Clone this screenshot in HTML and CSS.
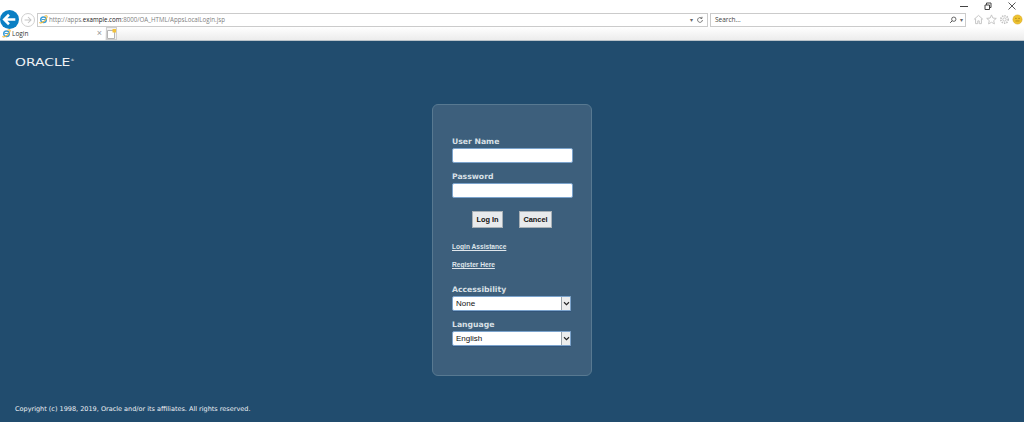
FILE: index.html
```html
<!DOCTYPE html>
<html lang="en">
<head>
<meta charset="utf-8">
<title>Login</title>
<link rel="stylesheet" href="styles.css">
</head>
<body>
<svg class="defs" width="0" height="0" aria-hidden="true">
  <symbol id="ie" viewBox="0 0 16 16">
    <circle cx="8" cy="8.500" r="5" fill="none" stroke="#3f9fd8" stroke-width="2.600"/>
    <path d="M4.500 8h8" stroke="#3f9fd8" stroke-width="1.800"/>
    <path d="M1.500 12.500C1 15 4 14.500 7 12.500 11 10 15 5 14.500 2.500 14 .8 11.500 1.300 9.500 2.500" fill="none" stroke="#f0b93a" stroke-width="1.800"/>
  </symbol>
</svg>
<header class="browser">
  <div class="window-row">
    <svg class="win-icon" viewBox="0 0 8 8"><path d="M0 4.500h8" stroke="#444" stroke-width="1"/></svg>
    <svg class="win-icon" viewBox="0 0 8 8"><path d="M1 3h4.500v4.500H1zM2.500 3V1H7v4.500H5.500" fill="none" stroke="#444" stroke-width="1"/></svg>
    <svg class="win-icon" viewBox="0 0 8 8"><path d="M.5.500l7 7M7.500.500l-7 7" stroke="#444" stroke-width=".9"/></svg>
  </div>
  <div class="nav-row">
    <div class="back">
      <svg viewBox="0 0 18 18"><path d="M14.500 9h-10M8.500 4.500L4 9l4.500 4.500" fill="none" stroke="#fff" stroke-width="2.400"/></svg>
    </div>
    <div class="forward">
      <svg viewBox="0 0 14 14"><path d="M3 7h7M7 3.500L10.500 7 7 10.500" fill="none" stroke="#c4c4c4" stroke-width="1.200"/></svg>
    </div>
    <div class="address">
      <svg class="ie"><use href="#ie"/></svg>
      <span class="url">http://apps.<b>example.com</b>:8000/OA_HTML/AppsLocalLogin.jsp</span>
      <span class="caret">▾</span>
      <svg class="mini" viewBox="0 0 10 10"><path d="M8 5a3 3 0 1 1-1-2.300M7.500 1v2h-2" fill="none" stroke="#555" stroke-width="1"/></svg>
    </div>
    <div class="search">
      <span class="search-text">Search...</span>
      <svg class="mini" viewBox="0 0 10 10"><circle cx="6" cy="4" r="2.700" fill="none" stroke="#444" stroke-width="1"/><path d="M4 6L1.500 8.500" stroke="#444" stroke-width="1.200"/></svg>
      <span class="caret">▾</span>
    </div>
    <div class="tools">
      <svg class="tool" viewBox="0 0 12 12"><path d="M1 6l5-4.500L11 6M2.800 5v5.500h2.400V7.500h1.600v3h2.400V5" fill="none" stroke="#c2c2c2" stroke-width="1"/></svg>
      <svg class="tool" viewBox="0 0 12 12"><path d="M6 1l1.500 3.400 3.700.4-2.800 2.400.8 3.600L6 9l-3.200 1.800.8-3.600L.8 4.800l3.700-.4z" fill="none" stroke="#c2c2c2" stroke-width="1"/></svg>
      <svg class="tool" viewBox="0 0 12 12"><circle cx="6" cy="6" r="1.800" fill="none" stroke="#c2c2c2" stroke-width="1"/><circle cx="6" cy="6" r="4" fill="none" stroke="#c2c2c2" stroke-width="1.800" stroke-dasharray="1.500 1.100"/></svg>
      <svg class="tool" viewBox="0 0 12 12"><circle cx="6" cy="6" r="5" fill="#eec32f" stroke="#d9a520" stroke-width=".6"/><circle cx="4.300" cy="4.800" r=".7" fill="#a8801a"/><circle cx="7.700" cy="4.800" r=".7" fill="#a8801a"/><path d="M3.800 7.600h4.400" stroke="#a8801a" stroke-width=".8"/></svg>
    </div>
  </div>
  <div class="tab-row">
    <div class="tab">
      <svg class="ie"><use href="#ie"/></svg>
      <span class="tab-title">Login</span>
      <span class="tab-close">×</span>
    </div>
    <div class="new-tab">
      <svg class="new-page" viewBox="0 0 9 10"><path d="M.5 1.500h7v8h-7z" fill="#fff" stroke="#b5b5b5"/><rect x="5.500" y="0" width="3.500" height="3.500" fill="#f2c13a"/></svg>
    </div>
  </div>
</header>
<main class="page">
  <div class="logo"><span class="logo-text">ORACLE<sup class="reg">®</sup></span></div>
  <section class="panel">
    <label class="label">User Name</label>
    <input class="field" type="text">
    <label class="label label-next">Password</label>
    <input class="field" type="password">
    <div class="buttons">
      <button class="btn btn-login">Log In</button>
      <button class="btn btn-cancel">Cancel</button>
    </div>
    <a class="link link-first" href="#">Login Assistance</a>
    <a class="link link-second" href="#">Register Here</a>
    <label class="label label-access">Accessibility</label>
    <div class="select"><span class="select-value">None</span><span class="arrow"><svg viewBox="0 0 8 6"><path d="M1 1.500l3 3 3-3" fill="none" stroke="#222" stroke-width="1.300"/></svg></span></div>
    <label class="label label-next">Language</label>
    <div class="select"><span class="select-value">English</span><span class="arrow"><svg viewBox="0 0 8 6"><path d="M1 1.500l3 3 3-3" fill="none" stroke="#222" stroke-width="1.300"/></svg></span></div>
  </section>
  <footer class="copyright">Copyright (c) 1998, 2019, Oracle and/or its affiliates. All rights reserved.</footer>
</main>
</body>
</html>
```
FILE: styles.css
```css
* { box-sizing: border-box; }
html, body { margin: 0; height: 100%; }
body { display: flex; flex-direction: column; height: 422px; overflow: hidden; background: #214c6e; font-family: "Liberation Sans", Arial, sans-serif; }
.defs { position: absolute; }

.browser { height: 41px; flex: none; background: #fff; display: flex; flex-direction: column; }
.window-row { height: 12px; display: flex; justify-content: flex-end; gap: 16px; padding: 2px 8px 0 0; }
.win-icon { width: 8px; height: 8px; }
.nav-row { height: 15px; display: flex; align-items: center; position: relative; }
.back { width: 19px; height: 19px; border-radius: 50%; background: #0a7fc4; flex: none; position: relative; z-index: 1; }
.back svg { display: block; width: 19px; height: 19px; }
.forward { width: 14px; height: 14px; border: 1px solid #cfcfcf; border-radius: 50%; margin-left: 2px; flex: none; display: flex; }
.forward svg { width: 12px; height: 12px; }
.address { margin-left: 2px; width: 671px; height: 14px; border: 1px solid #cbcbcb; display: flex; align-items: center; padding: 0 3px 0 1px; flex: none; }
.ie { width: 9px; height: 9px; flex: none; }
.url { font-family: "Open Sans", sans-serif; font-size: 6.200px; color: #808080; margin-left: 1px; flex: 1; }
.url b { font-weight: 400; color: #222; }
.caret { font-size: 6px; color: #666; margin-right: 3px; }
.mini { width: 8px; height: 8px; flex: none; }
.search { margin-left: 2px; width: 256px; height: 14px; border: 1px solid #cbcbcb; display: flex; align-items: center; padding: 0 1px 0 4px; flex: none; }
.search-text { font-family: "Open Sans", sans-serif; font-size: 6.500px; color: #444; flex: 1; }
.search .mini { margin-right: 3px; }
.search .caret { margin-right: 1px; }
.tools { display: flex; gap: 2px; margin-left: 7px; }
.tool { width: 11px; height: 11px; }

.tab-row { height: 14px; display: flex; background: linear-gradient(#fff, #ececec); border-bottom: 1px solid #b9c2c9; }
.tab { width: 105px; height: 13px; background: #fff; display: flex; align-items: center; padding: 0 2px; }
.tab-title { font-family: "Open Sans", sans-serif; font-size: 6.500px; color: #333; margin-left: 1px; flex: 1; }
.tab-close { font-size: 9px; color: #999; margin-right: 1px; line-height: 1; }
.new-tab { width: 11px; height: 13px; margin-left: 1px; border: 1px solid #cfcfcf; background: #f2f2f2; display: flex; align-items: center; justify-content: center; }
.new-page { width: 9px; height: 10px; }

.page { flex: 1; display: flex; flex-direction: column; align-items: center; }
.logo { align-self: flex-start; margin: 11px 0 0 15px; height: 15px; }
.logo-text { display: inline-block; transform: scaleX(1.32); transform-origin: left center; font-family: "DejaVu Sans", sans-serif; font-size: 10.500px; line-height: 12px; letter-spacing: 0; color: #eef1f4; }
.reg { font-size: 3px; vertical-align: top; line-height: 8px; }

.panel { margin-top: 37px; width: 160px; height: 272px; border: 1px solid #587991; border-radius: 6px; background: #3d5f7c; padding: 30px 19px 0; display: flex; flex-direction: column; align-items: flex-start; }
.label { font-family: "DejaVu Sans", sans-serif; font-weight: 700; font-size: 7.700px; line-height: 14px; color: #d9e0e6; height: 12px; }
.label-next { margin-top: 7px; }
.field { display: block; width: 121px; height: 15px; margin: 1px 0 0; padding: 0; border: 1px solid #7ba3cc; border-radius: 2px; background: #fff; }
.buttons { display: flex; gap: 16px; margin: 13px 0 0 20px; }
.btn { height: 17px; padding: 0; border: 1px solid #a8b0b6; background: #e8eaec; font-family: "Liberation Sans", sans-serif; font-weight: 700; font-size: 7.400px; color: #111; }
.btn-login { width: 31px; }
.btn-cancel { width: 33px; }
.link { font-family: "Liberation Sans", sans-serif; font-size: 6.600px; font-weight: 700; line-height: 10px; color: #dfe5ea; text-decoration: underline; }
.link-first { margin-top: 14px; }
.link-second { margin-top: 8px; }
.label-access { margin-top: 13px; }
.select { width: 119px; height: 15px; margin-top: 1px; background: #fff; border: 1px solid #7ba3cc; border-radius: 2px 0 0 2px; display: flex; align-items: center; box-shadow: 0 1px 0 #33557a; }
.select-value { flex: 1; font-size: 8px; color: #111; padding-left: 3px; }
.arrow { width: 9px; height: 13px; background: #eceded; border-left: 1px solid #9aa3aa; display: flex; align-items: center; justify-content: center; }
.arrow svg { width: 7px; height: 5px; }
.copyright { align-self: flex-start; margin: 28px 0 0 15px; font-family: "DejaVu Sans", sans-serif; font-size: 6.500px; line-height: 10px; color: #eef1f4; }
```
